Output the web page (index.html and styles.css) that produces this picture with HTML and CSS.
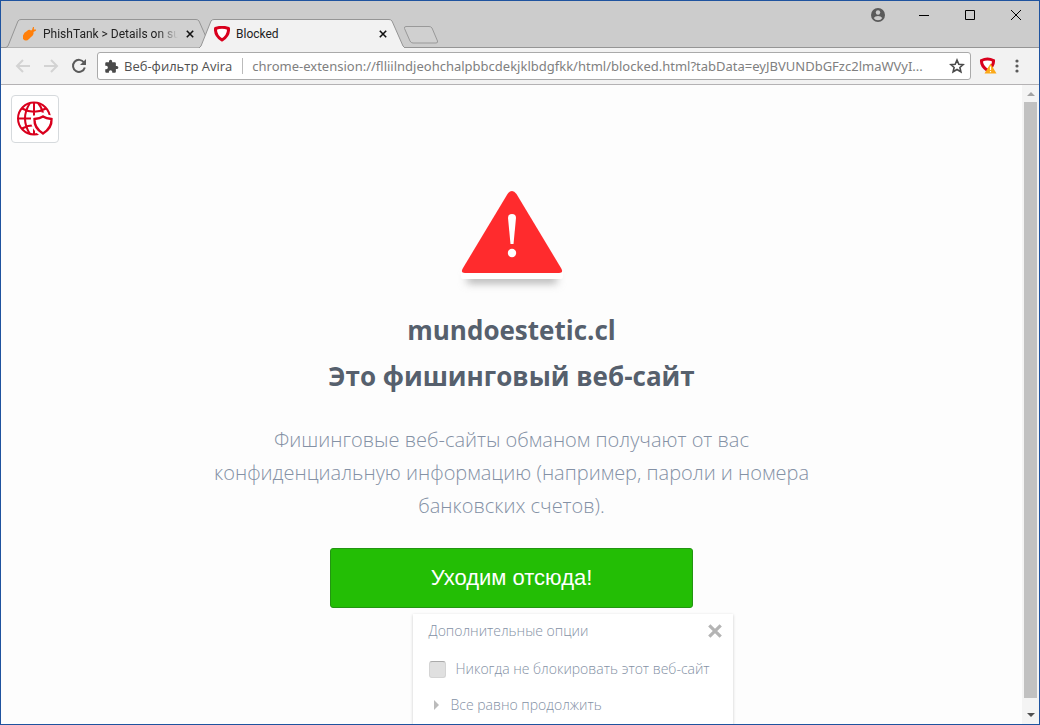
FILE: index.html
```html
<!DOCTYPE html>
<html lang="ru">
<head>
    <meta charset="UTF-8">
    <meta name="viewport" content="width=device-width, initial-scale=1.0">
    <title>Blocked</title>
    <link rel="stylesheet" href="styles.css">
</head>
<body>
<div class="window">
    <!-- Tab strip -->
    <header class="tab-strip">
        <div class="tabs">
            <div class="tab">
                <svg class="tab-shape" viewBox="0 0 206 29"><path d="M0 28.5 L2 27 L12 2 Q13 .5 15 .5 H190 Q192 .5 193 2 L204 27 L206 28.5" fill="#d0d0d0" stroke="#959595"/></svg>
                <svg class="tab-icon" viewBox="0 0 16 16"><path d="M2 9.500 Q3 6 6 5 Q8 3 10 4.500 L11 4 L12 1 L13 1 L12.800 3.500 L15 3.500 L15 4.500 L12.500 6 Q13 9 10 11 L8 13 Q5 16 2 13 Z" fill="#ff7f0a"/></svg>
                <span class="tab-title faded">PhishTank &gt; Details on su</span>
                <button class="tab-close" aria-label="Close tab"><svg viewBox="0 0 10 10"><path d="M1 1 L9 9 M9 1 L1 9"/></svg></button>
            </div>
            <div class="tab active">
                <svg class="tab-shape" viewBox="0 0 206 29"><path d="M0 29 L2 27 L12 2 Q13 .5 15 .5 H190 Q192 .5 193 2 L204 27 L206 29" fill="#f2f2f2" stroke="#959595"/></svg>
                <svg class="tab-icon" viewBox="0 0 16 16"><path d="M1.500 2.500 Q8 0 14.500 2.500 Q15 9.500 8 14 Q1 9.500 1.500 2.500 Z" fill="#fff" stroke="#d9001d" stroke-width="3" stroke-linejoin="round"/></svg>
                <span class="tab-title">Blocked</span>
                <button class="tab-close" aria-label="Close tab"><svg viewBox="0 0 10 10"><path d="M1 1 L9 9 M9 1 L1 9"/></svg></button>
            </div>
        </div>
        <button class="new-tab" aria-label="New tab"><svg viewBox="0 0 36 18"><path d="M3 .5 H26 Q28 .5 29 2 L34.500 15 Q35 17 33 17 H10 Q8 17 7 15 L1.500 2.500 Q1 .5 3 .5 Z" fill="#d0d0d0" stroke="#999"/></svg></button>
        <div class="window-buttons">
            <button class="profile" aria-label="Profile"><svg viewBox="0 0 14 14"><circle cx="7" cy="7" r="7" fill="#5a5a5a"/><circle cx="7" cy="4.500" r="2.200" fill="#ccc"/><path d="M2.700 10 Q4 8 7 8 Q10 8 11.300 10 Q10 12.200 7 12.200 Q4 12.200 2.700 10 Z" fill="#ccc"/></svg></button>
            <button aria-label="Minimize"><svg viewBox="0 0 12 12"><path d="M1 6.500 H11"/></svg></button>
            <button aria-label="Maximize"><svg viewBox="0 0 12 12"><path d="M1.500 1.500 H10.500 V10.500 H1.500 Z"/></svg></button>
            <button aria-label="Close"><svg viewBox="0 0 12 12"><path d="M1 1 L11 11 M11 1 L1 11"/></svg></button>
        </div>
    </header>

    <!-- Toolbar -->
    <nav class="toolbar">
        <button class="tool" aria-label="Back" disabled><svg viewBox="0 0 16 16"><path d="M15 8 H2 M8 2 L2 8 L8 14" fill="none" stroke="#d3d3d3" stroke-width="2"/></svg></button>
        <button class="tool" aria-label="Forward" disabled><svg viewBox="0 0 16 16"><path d="M1 8 H14 M8 2 L14 8 L8 14" fill="none" stroke="#d3d3d3" stroke-width="2"/></svg></button>
        <button class="tool" aria-label="Reload"><svg viewBox="0 0 16 16"><path d="M13 4.500 A6 6 0 1 0 13.800 9.500" fill="none" stroke="#5a5a5a" stroke-width="2"/><path d="M15 1 V7 H9 Z" fill="#5a5a5a"/></svg></button>
        <div class="address">
            <svg class="puzzle" viewBox="0 0 24 24"><path d="M20.500 11H19V7c0-1.100-.9-2-2-2h-4V3.500a2.500 2.500 0 0 0-5 0V5H4c-1.100 0-2 .9-2 2v3.800h1.500a2.700 2.700 0 0 1 0 5.400H2V20c0 1.100.9 2 2 2h3.800v-1.500a2.700 2.700 0 0 1 5.400 0V22H17c1.100 0 2-.9 2-2v-4h1.500a2.500 2.500 0 0 0 0-5z" fill="#4a4a4a"/></svg>
            <label class="origin" for="url">Веб-фильтр Avira</label>
            <input class="url" id="url" type="text" value="chrome-extension://flliilndjeohchalpbbcdekjklbdgfkk/html/blocked.html?tabData=eyJBVUNDbGFzc2lmaWVyI...">
            <button class="star" aria-label="Bookmark"><svg viewBox="0 0 16 16"><path d="M8 2 L9.800 6.200 L14.200 6.600 L10.900 9.500 L11.900 13.800 L8 11.500 L4.100 13.800 L5.100 9.500 L1.800 6.600 L6.200 6.200 Z" fill="none" stroke="#4a4a4a" stroke-width="1.600"/></svg></button>
        </div>
        <button class="extension" aria-label="Avira"><svg viewBox="0 0 18 18"><path d="M2.500 3.500 Q8.500 .5 14.500 3.500 Q15 9 8.500 13.500 Q2 9 2.500 3.500 Z" fill="#fff" stroke="#d9001d" stroke-width="3"/><path d="M11.500 6.500 L17.500 16.500 H5.500 Z" fill="#fba919"/><path d="M11.500 9.500 V13 M11.500 14 V15.200" stroke="#fff" stroke-width="1.200"/></svg></button>
        <button class="menu" aria-label="Menu"><svg viewBox="0 0 4 14"><circle cx="2" cy="2" r="1.600"/><circle cx="2" cy="7" r="1.600"/><circle cx="2" cy="12" r="1.600"/></svg></button>
    </nav>

    <div class="viewport">
        <main class="page">
            <a class="logo" href="#" aria-label="Avira">
                <svg viewBox="0 0 38 38" fill="none" stroke="#d9001d" stroke-width="2">
                    <circle cx="18" cy="18.500" r="16"/>
                    <path d="M18 2 V35 M2 18.500 H34 M6 8.500 Q18 15 30 8.500 M6 28.500 Q18 22 30 28.500 M14 3 Q4 18.500 14 34 M22 3 Q27 9 28 18"/>
                    <path d="M18.500 19 Q24 18.500 27 16.500 Q30 18.500 36 19 Q36 28 27 33.500 Q18 28 18.500 19 Z" fill="#fff" stroke="#fff" stroke-width="7"/>
                    <path d="M18.500 19 Q24 18.500 27 16.500 Q30 18.500 35.500 19 Q36 28 27 33.500 Q18 28 18.500 19 Z" stroke-width="2.400"/>
                </svg>
            </a>
            <svg class="warning" viewBox="0 0 120 104">
                <defs><filter id="blur" x="-20%" y="-200%" width="140%" height="500%"><feGaussianBlur stdDeviation="4"/></filter></defs>
                <path d="M15 86 H105 V94 H15 Z" fill="#aaa" filter="url(#blur)"/>
                <path d="M9 83 H111 V88 Q111 90 109 90 H11 Q9 90 9 88 Z" fill="#fff"/>
                <path d="M55.500 5 Q60 -1 64.500 5 L109 79 Q112 84 107 84 H13 Q8 84 11 79 Z" fill="#ff2b2d"/>
                <path d="M56 29 Q56 25 60 25 Q64 25 64 29 L61.500 55 H58.500 Z" fill="#fff"/>
                <circle cx="60" cy="64" r="4.200" fill="#fff"/>
            </svg>
            <h1>mundoestetic.cl<br>Это фишинговый веб-сайт</h1>
            <p class="description">Фишинговые веб-сайты обманом получают от вас конфиденциальную информацию (например, пароли и номера банковских счетов).</p>
            <button class="leave">Уходим отсюда!</button>
            <div class="options-row">
                <section class="options">
                    <div class="options-head">
                        <span>Дополнительные опции</span>
                        <button class="options-close" aria-label="Закрыть"><svg viewBox="0 0 14 14"><path d="M2 2 L12 12 M12 2 L2 12" stroke="#b4b4b4" stroke-width="2.800"/></svg></button>
                    </div>
                    <label class="never"><input type="checkbox">Никогда не блокировать этот веб-сайт</label>
                    <a class="proceed" href="#">Все равно продолжить</a>
                </section>
            </div>
        </main>
        <!-- Scrollbar -->
        <div class="scrollbar">
            <span class="arrow up"></span>
            <span class="thumb"></span>
            <span class="arrow down"></span>
        </div>
    </div>
</div>
</body>
</html>
```
FILE: styles.css
```css
* {
    margin: 0;
    padding: 0;
    box-sizing: border-box;
}

body {
    font-family: "Open Sans", "Noto Sans", sans-serif;
    background-color: #fdfdfd;
}

button {
    background: none;
    border: none;
    font: inherit;
}

svg {
    display: block;
}

.window {
    height: 100vh;
    display: flex;
    flex-direction: column;
    border: 1px solid #1f539f;
    overflow: hidden;
}

/* Tab strip */
.tab-strip {
    display: flex;
    align-items: flex-end;
    height: 47px;
    padding-left: 5px;
    background-color: #ccc;
    box-shadow: inset 0 -1px #959595;
    flex-shrink: 0;
}

.tabs {
    display: flex;
}

.tab {
    position: relative;
    display: flex;
    align-items: center;
    width: 206px;
    height: 29px;
    padding: 0 14px 0 15px;
    font-family: Roboto, "Open Sans", sans-serif;
    font-size: 12px;
    color: #222;
}

.tab + .tab {
    margin-left: -13px;
}

.tab-shape {
    position: absolute;
    inset: 0;
    width: 100%;
    height: 100%;
}

.tab-icon {
    position: relative;
    width: 16px;
    height: 16px;
    flex-shrink: 0;
}

.tab-title {
    position: relative;
    flex: 1;
    margin-left: 6px;
    overflow: hidden;
    white-space: nowrap;
}

.tab-title.faded {
    mask-image: linear-gradient(to right, #000 85%, transparent);
}

.tab-close {
    position: relative;
    width: 16px;
    padding: 4px;
    margin-left: 4px;
}

.tab-close path {
    stroke: #111;
    stroke-width: 2;
}

.new-tab {
    width: 36px;
    margin: 0 0 4px -2px;
}

.window-buttons {
    display: flex;
    align-self: flex-start;
    margin-left: auto;
}

.window-buttons button {
    width: 46px;
    height: 28px;
    padding: 0 17px;
}

.window-buttons path {
    fill: none;
    stroke: #000;
}

.window-buttons .profile {
    padding: 0 16px;
}

.window-buttons .profile path {
    fill: #ccc;
    stroke: none;
}

/* Toolbar */
.toolbar {
    display: flex;
    align-items: center;
    height: 37px;
    padding: 0 14px;
    background-color: #f2f2f2;
    border-bottom: 1px solid #b4b2b4;
    flex-shrink: 0;
}

.tool {
    width: 16px;
    margin-right: 12px;
}

.address {
    flex: 1;
    display: flex;
    align-items: center;
    height: 28px;
    margin-left: -2px;
    padding: 0 5px 0 6px;
    background-color: #fff;
    border: 1px solid #aaa;
    border-radius: 3px;
    font-size: 13px;
}

.puzzle {
    width: 15px;
    margin-right: 5px;
}

.origin {
    padding-right: 10px;
    border-right: 1px solid #bbb;
    line-height: 16px;
    color: #505050;
    white-space: nowrap;
}

.url {
    flex: 1;
    min-width: 0;
    margin: 0 8px 0 9px;
    border: none;
    outline: none;
    font-family: "Noto Sans", "Open Sans", sans-serif;
    font-size: 13px;
    color: #808080;
    text-overflow: ellipsis;
}

.star {
    width: 16px;
}

.extension {
    width: 18px;
    margin-left: 8px;
}

.menu {
    width: 4px;
    margin: 0 6px 0 18px;
    fill: #5a5a5a;
}

/* Blocked page */
.viewport {
    flex: 1;
    display: flex;
    min-height: 0;
}

.page {
    flex: 1;
    display: flex;
    flex-direction: column;
    align-items: center;
    padding: 10px 10px 0;
    overflow: hidden;
    color: #8491a5;
}

.page > * {
    flex-shrink: 0;
}

.logo {
    align-self: flex-start;
    padding: 4px;
    width: 48px;
    height: 48px;
    background-color: #fff;
    border: 1px solid #d6dadd;
    border-radius: 4px;
}

.warning {
    width: 120px;
    margin-top: 46px;
}

h1 {
    margin-top: 14px;
    font-size: 26px;
    line-height: 46px;
    font-weight: 700;
    text-align: center;
    color: #56606d;
}

.description {
    max-width: 640px;
    margin-top: 24px;
    font-size: 20px;
    line-height: 33px;
    font-weight: 300;
    text-align: center;
}

.leave {
    width: 363px;
    height: 60px;
    margin-top: 26px;
    background-color: #23be05;
    border: 1px solid #239512;
    border-radius: 3px;
    font-family: "Liberation Sans", sans-serif;
    font-size: 22px;
    color: #fff;
}

.options-row {
    display: flex;
    justify-content: flex-end;
    width: 442px;
    margin-top: 6px;
}

.options {
    width: 320px;
    padding: 6px 16px 24px;
    background-color: #fff;
    box-shadow: 0 1px 3px rgba(0, 0, 0, 0.2);
    font-size: 14px;
    line-height: 22px;
    font-weight: 300;
}

.options-head {
    display: flex;
    justify-content: space-between;
}

.options-close {
    width: 16px;
    margin-right: -6px;
}

.never {
    display: flex;
    align-items: center;
    gap: 10px;
    margin-top: 16px;
    white-space: nowrap;
}

.never input {
    appearance: none;
    flex-shrink: 0;
    width: 17px;
    height: 17px;
    background-color: #e0e0e0;
    border: 1px solid #d4d4d4;
    border-top-color: #aaa;
    border-radius: 3px;
}

.proceed {
    display: flex;
    align-items: center;
    gap: 12px;
    margin-top: 14px;
    padding-left: 5px;
    color: inherit;
    text-decoration: none;
}

.proceed::before {
    content: "";
    border: 5px solid transparent;
    border-left-color: #bbb;
    border-right-width: 0;
}

/* Scrollbar */
.scrollbar {
    width: 17px;
    display: flex;
    flex-direction: column;
    align-items: center;
    background-color: #f4f4f4;
}

.thumb {
    flex: 1;
    width: 13px;
    background-color: #c1c1c1;
}

.arrow {
    display: flex;
    align-items: center;
    justify-content: center;
    height: 17px;
}

.arrow.down {
    height: 26px;
    padding-top: 8px;
}

.arrow::before {
    content: "";
    border: 4px solid transparent;
}

.up::before {
    border-top-width: 0;
    border-bottom-color: #a3a3a3;
}

.down::before {
    border-bottom-width: 0;
    border-top-color: #505050;
}
```
